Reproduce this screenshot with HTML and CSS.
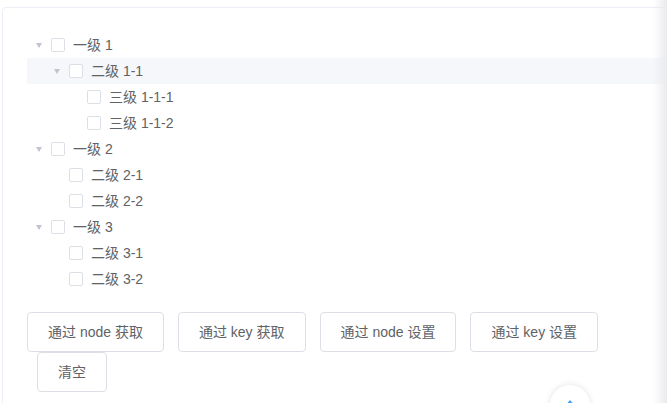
FILE: index.html
```html
<!DOCTYPE html>
<html>
<head>
<meta charset="utf-8">
<link rel="stylesheet" href="styles.css">
</head>
<body>
<div class="card">
  <div class="tree">
    <div class="node lv1"><span class="caret open"></span><span class="cb"></span><span class="label">一级 1</span></div>
    <div class="node lv2 hover"><span class="caret open"></span><span class="cb"></span><span class="label">二级 1-1</span></div>
    <div class="node lv3"><span class="caret leaf"></span><span class="cb"></span><span class="label">三级 1-1-1</span></div>
    <div class="node lv3"><span class="caret leaf"></span><span class="cb"></span><span class="label">三级 1-1-2</span></div>
    <div class="node lv1"><span class="caret open"></span><span class="cb"></span><span class="label">一级 2</span></div>
    <div class="node lv2"><span class="caret leaf"></span><span class="cb"></span><span class="label">二级 2-1</span></div>
    <div class="node lv2"><span class="caret leaf"></span><span class="cb"></span><span class="label">二级 2-2</span></div>
    <div class="node lv1"><span class="caret open"></span><span class="cb"></span><span class="label">一级 3</span></div>
    <div class="node lv2"><span class="caret leaf"></span><span class="cb"></span><span class="label">二级 3-1</span></div>
    <div class="node lv2"><span class="caret leaf"></span><span class="cb"></span><span class="label">二级 3-2</span></div>
  </div>
  <div class="buttons"><button class="btn first">通过 node 获取</button> <button class="btn">通过 key 获取</button> <button class="btn">通过 node 设置</button> <button class="btn">通过 key 设置</button> <button class="btn">清空</button></div>
</div>
<div class="edge-shadow"></div>
<div class="backtop"><span class="backtop-icon"></span></div>
</body>
</html>
```
FILE: styles.css
```css
html, body {
  margin: 0;
  padding: 0;
  overflow: hidden;
  height: 403px;
  background: #fff;
}
body {
  font-family: "Liberation Sans", "Noto Sans CJK SC", sans-serif;
  font-size: 14px;
  color: #606266;
  position: relative;
}
.card {
  margin: 7px 0 0 2px;
  width: 640px;
  height: 370px;
  padding: 24px;
  border: 1px solid #ebeef5;
  border-radius: 4px;
  background: #fff;
}
.tree {
  display: flex;
  flex-direction: column;
}
.node {
  display: flex;
  align-items: center;
  height: 26px;
}
.node.hover {
  background: #f5f7fa;
}
.lv2 { padding-left: 18px; }
.lv3 { padding-left: 36px; }
.caret {
  width: 24px;
  height: 24px;
  display: flex;
  align-items: center;
  justify-content: center;
  flex: none;
}
.caret.open::before {
  content: "";
  width: 0;
  height: 0;
  border-left: 3.5px solid transparent;
  border-right: 3.5px solid transparent;
  border-top: 5px solid #c0c4cc;
}
.cb {
  width: 12px;
  height: 12px;
  border: 1px solid #dcdfe6;
  border-radius: 2px;
  background: #fff;
  margin-right: 8px;
  flex: none;
}
.label {
  line-height: 26px;
}
.buttons {
  margin-top: 20px;
  font-size: 0;
}
.btn {
  display: inline-block;
  font-family: "Liberation Sans", "Noto Sans CJK SC", sans-serif;
  font-size: 14px;
  color: #606266;
  background: #fff;
  border: 1px solid #dcdfe6;
  border-radius: 4px;
  padding: 0 20px;
  height: 40px;
  line-height: 38px;
  margin: 0 0 0 14px;
  vertical-align: top;
}
.btn.first {
  margin-left: 0;
}
.btn:last-child {
  margin-left: 10px;
}
.edge-shadow {
  position: absolute;
  top: 0;
  right: 0;
  width: 14px;
  height: 403px;
  background: linear-gradient(to right, rgba(235,235,240,0), rgba(232,232,237,0.9));
}
.backtop {
  position: absolute;
  left: 550px;
  top: 385px;
  width: 40px;
  height: 40px;
  border-radius: 50%;
  background: #fff;
  box-shadow: 0 0 6px rgba(0,0,0,0.12);
  display: flex;
  justify-content: center;
}
.backtop-icon {
  margin-top: 15px;
  width: 0;
  height: 0;
  border-left: 5px solid transparent;
  border-right: 5px solid transparent;
  border-bottom: 6px solid #409eff;
}
```
